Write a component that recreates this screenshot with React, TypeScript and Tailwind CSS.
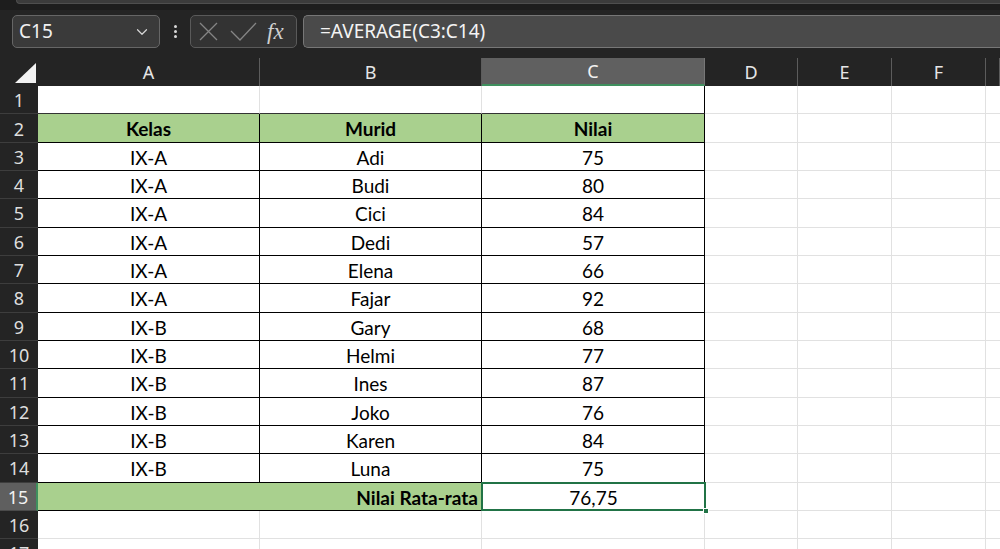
import { ChevronDown } from "lucide-react";

type Row = [string, string, string];

const data: Row[] = [
  ["IX-A", "Adi", "75"],
  ["IX-A", "Budi", "80"],
  ["IX-A", "Cici", "84"],
  ["IX-A", "Dedi", "57"],
  ["IX-A", "Elena", "66"],
  ["IX-A", "Fajar", "92"],
  ["IX-B", "Gary", "68"],
  ["IX-B", "Helmi", "77"],
  ["IX-B", "Ines", "87"],
  ["IX-B", "Joko", "76"],
  ["IX-B", "Karen", "84"],
  ["IX-B", "Luna", "75"],
];

const cols = ["A", "B", "C", "D", "E", "F", ""];

function RowHead({ n, active }: { n: number; active?: boolean }) {
  return (
    <div
      className={
        active
          ? "flex items-center justify-center pt-[2px] bg-[#5f5f5f] text-[#f2f2f2] border-b border-b-[#4a4a4a] border-r-2 border-r-[#3f8f5e] text-[18px] font-['Noto_Sans',sans-serif]"
          : "flex items-center justify-center pt-[2px] bg-[#242424] text-[#dedede] border-b border-b-[#3d3d3d] text-[18px] font-['Noto_Sans',sans-serif]"
      }
    >
      {n}
    </div>
  );
}

function Empty({ last }: { last?: boolean }) {
  return <div className={last ? "bg-white border-b border-[#e1e1e1]" : "bg-white border-r border-b border-[#e1e1e1]"} />;
}

function TableCell({ text, bold, green }: { text: string; bold?: boolean; green?: boolean }) {
  return (
    <div
      className={
        (green ? "bg-[#a9d08e] " : "bg-white ") +
        "flex items-center justify-center pt-[3px] border-r border-b border-black text-[19px] text-black" +
        (bold ? " font-bold" : "")
      }
    >
      {text}
    </div>
  );
}

export default function App() {
  return (
    <div className="w-[1000px] h-[549px] overflow-hidden bg-[#242424] font-['Open_Sans',sans-serif] select-none">
      {/* ribbon edge */}
      <div className="h-[10px] bg-[#1d1d1d]">
        <div className="ml-[16px] h-[4px] rounded-bl-[6px] bg-[#3b3b3b] border-b border-l border-[#4e4e4e]" />
      </div>

      {/* formula row */}
      <div className="flex items-center h-[48px] pl-[12px] pb-[10px] pt-[5px]">
        <div className="flex items-center justify-between w-[148px] h-[33px] rounded-[5px] border border-[#666] bg-[#3a3a3a] pl-[6px] pr-[8px]">
          <span className="text-[19px] text-[#f0f0f0] font-['Noto_Sans',sans-serif]">C15</span>
          <ChevronDown size={18} strokeWidth={1.6} color="#d6d6d6" />
        </div>
        <div className="flex flex-col items-center gap-[2px] w-[30px]">
          <span className="w-[3px] h-[3px] rounded-full bg-[#d8d8d8]" />
          <span className="w-[3px] h-[3px] rounded-full bg-[#d8d8d8]" />
          <span className="w-[3px] h-[3px] rounded-full bg-[#d8d8d8]" />
        </div>
        <div className="flex items-center w-[107px] h-[33px] rounded-[5px] border border-[#5a5a5a] bg-[#333] pl-[8px]">
          <svg width="19" height="19" viewBox="0 0 19 19" fill="none" stroke="#858585" strokeWidth="1.3">
            <path d="M1 1L18 18M18 1L1 18" />
          </svg>
          <svg width="27" height="19" viewBox="0 0 27 19" fill="none" stroke="#858585" strokeWidth="1.3" className="ml-[12px]">
            <path d="M1 9L10 18L26 1" />
          </svg>
          <span className="ml-[10px] italic text-[23px] leading-none text-[#cfcfcf] font-['Liberation_Serif',serif]">fx</span>
        </div>
        <div className="flex-1 ml-[6px] h-[33px] rounded-l-[5px] border border-r-0 border-[#777] bg-[#4a4a4a] flex items-center pl-[16px]">
          <span className="text-[19px] text-[#f4f4f4] font-['Noto_Sans',sans-serif]">=AVERAGE(C3:C14)</span>
        </div>
      </div>

      {/* grid */}
      <div className="grid grid-cols-[38px_222px_222px_223px_93px_94px_94px_1fr] grid-rows-[28px_repeat(17,28.33px)] font-['Lato',sans-serif]">
        {/* header row */}
        <div className="relative bg-[#242424] border-b border-[#242424]">
          <svg width="38" height="28" viewBox="0 0 38 28" className="absolute inset-0">
            <polygon points="15,25 36,5 36,25" fill="#f2f2f2" />
          </svg>
        </div>
        {cols.map((c, i) =>
          c === "C" ? (
            <div
              key={i}
              className="flex items-center justify-center bg-[#606060] text-[#f2f2f2] text-[18px] border-b-2 border-[#3f8f5e] border-r border-r-[#777] font-['Noto_Sans',sans-serif]"
            >
              {c}
            </div>
          ) : (
            <div
              key={i}
              className="flex items-center justify-center bg-[#242424] text-[#e6e6e6] text-[18px] border-r border-[#5c5c5c] font-['Noto_Sans',sans-serif]"
            >
              {c}
            </div>
          )
        )}

        {/* row 1 */}
        <RowHead n={1} />
        <div className="bg-white border-r border-r-[#e1e1e1] border-b border-b-[#333]" />
        <div className="bg-white border-r border-r-[#e1e1e1] border-b border-b-[#333]" />
        <div className="bg-white border-r border-r-black border-b border-b-[#333]" />
        <Empty />
        <Empty />
        <Empty />
        <Empty last />

        {/* row 2 */}
        <RowHead n={2} />
        <TableCell text="Kelas" bold green />
        <TableCell text="Murid" bold green />
        <TableCell text="Nilai" bold green />
        <Empty />
        <Empty />
        <Empty />
        <Empty last />

        {data.map((r, i) => (
          <div key={i} className="contents">
            <RowHead n={i + 3} />
            <TableCell text={r[0]} />
            <TableCell text={r[1]} />
            <TableCell text={r[2]} />
            <Empty />
            <Empty />
            <Empty />
            <Empty last />
          </div>
        ))}

        {/* row 15 */}
        <RowHead n={15} active />
        <div className="col-span-2 bg-[#a9d08e] flex items-center justify-end pr-[3px] pt-[3px] border-b border-r border-black text-[19px] font-bold text-black">
          Nilai Rata-rata
        </div>
        <div className="relative bg-white flex items-center justify-center pt-[3px] border-b border-black text-[19px] text-black">
          76,75
          <div className="absolute -left-[1px] -top-[1px] -right-[1px] -bottom-[1px] border-2 border-[#217346]" />
          <div className="absolute -right-[4px] -bottom-[4px] w-[6px] h-[6px] bg-[#217346] border border-white" />
        </div>
        <Empty />
        <Empty />
        <Empty />
        <Empty last />

        {/* rows 16-17 */}
        {[16, 17].map((n) => (
          <div key={n} className="contents">
            <RowHead n={n} />
            <Empty />
            <Empty />
            <Empty />
            <Empty />
            <Empty />
            <Empty />
            <Empty last />
          </div>
        ))}
      </div>
    </div>
  );
}
